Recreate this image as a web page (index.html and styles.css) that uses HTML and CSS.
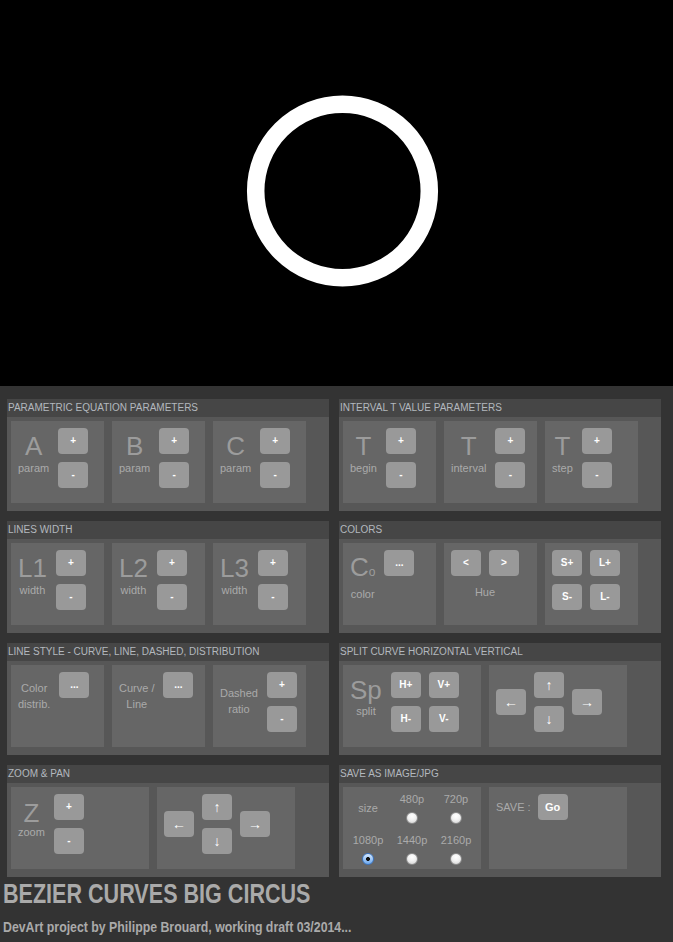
FILE: index.html
```html
<!DOCTYPE html>
<html lang="en">
<head>
<meta charset="utf-8">
<title>Bezier Curves Big Circus</title>
<link rel="stylesheet" href="styles.css">
</head>
<body>
<div class="stage">
  <svg width="673" height="386" viewBox="0 0 673 386"><circle cx="342.5" cy="191" r="86.8" fill="none" stroke="#fff" stroke-width="17.5"/></svg>
</div>
<div class="panels">
  <section class="panel">
    <h2 class="ph">PARAMETRIC EQUATION PARAMETERS</h2>
    <div class="pb">
      <div class="card">
        <div class="lb"><span class="big">A</span><span class="cap">param</span></div>
        <div class="btns"><button class="btn">+</button><button class="btn">-</button></div>
      </div>
      <div class="card">
        <div class="lb"><span class="big">B</span><span class="cap">param</span></div>
        <div class="btns"><button class="btn">+</button><button class="btn">-</button></div>
      </div>
      <div class="card">
        <div class="lb"><span class="big">C</span><span class="cap">param</span></div>
        <div class="btns"><button class="btn">+</button><button class="btn">-</button></div>
      </div>
    </div>
  </section>
  <section class="panel">
    <h2 class="ph">INTERVAL T VALUE PARAMETERS</h2>
    <div class="pb">
      <div class="card">
        <div class="lb"><span class="big">T</span><span class="cap">begin</span></div>
        <div class="btns"><button class="btn">+</button><button class="btn">-</button></div>
      </div>
      <div class="card">
        <div class="lb"><span class="big">T</span><span class="cap">interval</span></div>
        <div class="btns"><button class="btn">+</button><button class="btn">-</button></div>
      </div>
      <div class="card">
        <div class="lb"><span class="big">T</span><span class="cap">step</span></div>
        <div class="btns"><button class="btn">+</button><button class="btn">-</button></div>
      </div>
    </div>
  </section>
  <section class="panel">
    <h2 class="ph">LINES WIDTH</h2>
    <div class="pb">
      <div class="card">
        <div class="lb"><span class="big">L1</span><span class="cap">width</span></div>
        <div class="btns"><button class="btn">+</button><button class="btn">-</button></div>
      </div>
      <div class="card">
        <div class="lb"><span class="big">L2</span><span class="cap">width</span></div>
        <div class="btns"><button class="btn">+</button><button class="btn">-</button></div>
      </div>
      <div class="card">
        <div class="lb"><span class="big">L3</span><span class="cap">width</span></div>
        <div class="btns"><button class="btn">+</button><button class="btn">-</button></div>
      </div>
    </div>
  </section>
  <section class="panel">
    <h2 class="ph">COLORS</h2>
    <div class="pb">
      <div class="card">
        <div class="lb lb-co"><span class="big">C<span class="small-o">o</span></span><span class="cap">color</span></div>
        <div class="btns"><button class="btn">...</button></div>
      </div>
      <div class="card">
        <div class="huebox">
          <div class="btns two"><button class="btn">&lt;</button><button class="btn">&gt;</button></div>
          <span class="cap hue">Hue</span>
        </div>
      </div>
      <div class="card">
        <div class="btns two"><button class="btn">S+</button><button class="btn">L+</button><button class="btn">S-</button><button class="btn">L-</button></div>
      </div>
    </div>
  </section>
  <section class="panel">
    <h2 class="ph">LINE STYLE - CURVE, LINE, DASHED, DISTRIBUTION</h2>
    <div class="pb">
      <div class="card">
        <div class="txt">Color<br>distrib.</div>
        <div class="btns"><button class="btn">...</button></div>
      </div>
      <div class="card">
        <div class="txt">Curve /<br>Line</div>
        <div class="btns"><button class="btn">...</button></div>
      </div>
      <div class="card">
        <div class="txt low">Dashed<br>ratio</div>
        <div class="btns"><button class="btn">+</button><button class="btn">-</button></div>
      </div>
    </div>
  </section>
  <section class="panel">
    <h2 class="ph">SPLIT CURVE HORIZONTAL VERTICAL</h2>
    <div class="pb">
      <div class="card wide">
        <div class="lb lb-sp"><span class="big">Sp</span><span class="cap">split</span></div>
        <div class="btns two"><button class="btn">H+</button><button class="btn">V+</button><button class="btn">H-</button><button class="btn">V-</button></div>
      </div>
      <div class="card wide">
        <div class="arrows">
          <button class="btn arr arr-l">&#8592;</button>
          <button class="btn arr arr-u">&#8593;</button>
          <button class="btn arr arr-d">&#8595;</button>
          <button class="btn arr arr-r">&#8594;</button>
        </div>
      </div>
    </div>
  </section>
  <section class="panel">
    <h2 class="ph">ZOOM &amp; PAN</h2>
    <div class="pb">
      <div class="card wide">
        <div class="lb lb-z"><span class="big">Z</span><span class="cap">zoom</span></div>
        <div class="btns"><button class="btn">+</button><button class="btn">-</button></div>
      </div>
      <div class="card wide">
        <div class="arrows">
          <button class="btn arr arr-l">&#8592;</button>
          <button class="btn arr arr-u">&#8593;</button>
          <button class="btn arr arr-d">&#8595;</button>
          <button class="btn arr arr-r">&#8594;</button>
        </div>
      </div>
    </div>
  </section>
  <section class="panel">
    <h2 class="ph">SAVE AS IMAGE/JPG</h2>
    <div class="pb">
      <div class="card wide save">
        <div class="sizes">
          <span class="opt size-lbl">size</span>
          <label class="opt">480p<input class="radio" type="radio" name="sz"></label>
          <label class="opt">720p<input class="radio" type="radio" name="sz"></label>
          <label class="opt">1080p<input class="radio" type="radio" name="sz" checked></label>
          <label class="opt">1440p<input class="radio" type="radio" name="sz"></label>
          <label class="opt">2160p<input class="radio" type="radio" name="sz"></label>
        </div>
      </div>
      <div class="card wide">
        <div class="gorow"><span class="save-lbl">SAVE :</span><button class="btn go">Go</button></div>
      </div>
    </div>
  </section>
</div>
<h1 class="title">BEZIER CURVES BIG CIRCUS</h1>
<p class="subtitle">DevArt project by Philippe Brouard, working draft 03/2014...</p>
</body>
</html>
```

FILE: styles.css
```css
body {
  margin: 0;
  background: #333;
  font-family: "Liberation Sans", Arial, sans-serif;
}

.stage {
  height: 386px;
  background: #000;
}

.stage svg {
  display: block;
}

.panels {
  display: grid;
  grid-template-columns: 322px 322px;
  gap: 10px;
  padding: 13px 0 0 7px;
}

.panel {
  background: #575757;
}

.ph {
  margin: 0;
  height: 18px;
  padding-left: 1px;
  background: #464646;
  color: #b3b8be;
  font-size: 10px;
  font-weight: normal;
  line-height: 18px;
  white-space: nowrap;
}

.pb {
  display: flex;
  gap: 8px;
  padding: 4px 4px 8px;
}

.card {
  box-sizing: border-box;
  width: 93px;
  height: 82px;
  padding: 7px 0 0 7px;
  background: #666;
  display: flex;
  align-items: flex-start;
}

.card.wide {
  width: 138px;
}

.lb {
  display: flex;
  flex-direction: column;
  align-items: center;
  margin: 5px 9px 0 0;
  color: #9c9c9c;
}

.big {
  font-size: 26px;
  line-height: 26px;
}

.small-o {
  font-size: 12px;
}

.cap {
  font-size: 11px;
  line-height: 13px;
  margin-top: 3px;
  color: #aaa;
}

.lb-co {
  margin-top: 4px;
}

.lb-sp {
  margin-top: 5px;
}

.lb-sp .cap {
  margin-top: 2px;
  line-height: 12px;
}

.lb-z {
  margin-top: 6px;
}

.lb-z .cap {
  margin-top: 0;
}

.txt {
  margin: 8px 9px 0 0;
  font-size: 11px;
  line-height: 16px;
  text-align: center;
  color: #aaa;
}

.txt.low {
  margin-top: 13px;
}

.btns {
  display: grid;
  grid-template-columns: 30px;
  gap: 8px;
}

.btns.two {
  grid-template-columns: 30px 30px;
}

.btn {
  width: 30px;
  height: 26px;
  padding: 0;
  border: 0;
  border-radius: 4px;
  background: #999;
  color: #fff;
  font: bold 10px/26px "Liberation Sans", Arial, sans-serif;
  text-align: center;
}

.btn.go {
  font-size: 11px;
}

.btn.arr {
  font-size: 14px;
  font-weight: normal;
}

.huebox {
  display: flex;
  flex-direction: column;
  align-items: center;
}

.hue {
  margin-top: 10px;
}

.arrows {
  display: grid;
  grid-template-columns: repeat(3, 30px);
  grid-template-rows: 26px 26px;
  gap: 8px;
}

.arr-l {
  grid-column: 1;
  grid-row: 1 / 3;
  align-self: center;
}

.arr-u {
  grid-column: 2;
  grid-row: 1;
}

.arr-d {
  grid-column: 2;
  grid-row: 2;
}

.arr-r {
  grid-column: 3;
  grid-row: 1 / 3;
  align-self: center;
}

.card.save {
  padding: 6px 0 0 3px;
}

.sizes {
  display: grid;
  grid-template-columns: repeat(3, 44px);
  row-gap: 10px;
}

.opt {
  display: flex;
  flex-direction: column;
  align-items: center;
  font-size: 11px;
  line-height: 13px;
  color: #aaa;
}

.size-lbl {
  align-self: center;
}

.radio {
  appearance: none;
  -webkit-appearance: none;
  box-sizing: border-box;
  width: 12px;
  height: 12px;
  margin: 6px 0 0;
  border: 1px solid #8c8c8c;
  border-radius: 50%;
  background: radial-gradient(circle at 50% 30%, #fff 0, #f2f2f2 45%, #cfcfcf 100%);
}

.radio:checked {
  border-color: #3d74bd;
  background: radial-gradient(circle, #111 0, #111 1.6px, transparent 2.3px), linear-gradient(#d4e8ff, #6ea9ee);
}

.gorow {
  display: flex;
  align-items: center;
  gap: 7px;
}

.save-lbl {
  font-size: 11px;
  color: #aaa;
}

.title {
  margin: 1px 0 0 3px;
  font-size: 28px;
  line-height: 32px;
  font-weight: bold;
  color: #aaa;
  white-space: nowrap;
  transform: scaleX(0.77);
  transform-origin: 0 0;
}

.subtitle {
  margin: 8px 0 0 3px;
  font-size: 14px;
  line-height: 18px;
  font-weight: bold;
  color: #aaa;
  white-space: nowrap;
  transform: scaleX(0.88);
  transform-origin: 0 0;
}
```
